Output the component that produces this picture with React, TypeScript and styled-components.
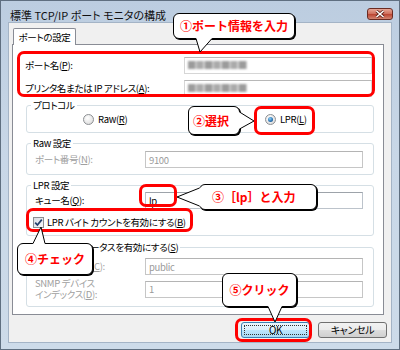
import React from "react";
import styled, { createGlobalStyle } from "styled-components";

const UI_FONT = `"Noto Sans CJK JP", "Noto Sans", sans-serif`;

const GlobalStyle = createGlobalStyle`
    html, body {
        margin: 0;
        padding: 0;
        background: #fff;
    }
    body {
        font-family: ${UI_FONT};
        font-size: 9.5px;
        letter-spacing: -0.35px;
        font-feature-settings: "palt";
        color: #000;
    }
    * {
        box-sizing: border-box;
    }
`

// Window frame

const Stage = styled.div`
    position: relative;
    width: 400px;
    height: 350px;
`

const Window = styled.div`
    width: 400px;
    height: 350px;
    border: 1px solid #5f6f80;
    background: linear-gradient(180deg, #bccde0 0%, #c8d7e7 45%, #cddbe9 100%);
    display: flex;
    flex-direction: column;
    padding: 0 7px 6px 7px;
`

const TitleBar = styled.div`
    height: 21px;
    display: flex;
    align-items: flex-start;
    justify-content: space-between;
`

const Title = styled.div`
    margin: 7px 0 0 2px;
    line-height: 14px;
    font-size: 11px;
    letter-spacing: 0;
    color: #101010;
`

const CloseButton = styled.div`
    margin: 7px -1px 0 0;
    width: 26px;
    height: 12px;
    border: 1px solid #6a2b22;
    border-radius: 3px;
    background: linear-gradient(180deg, #e7a797 0%, #cf6f5c 48%, #bb4330 52%, #d28571 100%);
    display: flex;
    align-items: center;
    justify-content: center;
`

const Client = styled.div`
    flex: 1;
    background: #f0f0f0;
    border: 1px solid #a4b4c6;
    display: flex;
    flex-direction: column;
    padding-top: 5px;
`

// Tabs

const TabStrip = styled.div`
    display: flex;
    padding-left: 4px;
    position: relative;
    z-index: 1;
`

const Tab = styled.div`
    width: 63px;
    height: 17px;
    margin-bottom: -1px;
    background: #fff;
    border: 1px solid #898c95;
    border-bottom: none;
    border-radius: 2px 2px 0 0;
    display: flex;
    align-items: center;
    justify-content: center;
    line-height: 14px;
`

const Panel = styled.div`
    margin-left: 3px;
    width: 372px;
    height: 271px;
    background: #fff;
    border: 1px solid #898c95;
    padding: 11px 10px 0 12px;
    display: flex;
    flex-direction: column;
`

// Rows and fields

const Row = styled.div<{ $h: number; $mt?: number; $ml?: number }>`
    display: flex;
    align-items: center;
    height: ${({ $h }) => $h}px;
    margin-top: ${({ $mt }) => $mt ?? 0}px;
    margin-left: ${({ $ml }) => $ml ?? 0}px;
`

const FieldLabel = styled.div<{ $w: number; $disabled?: boolean }>`
    width: ${({ $w }) => $w}px;
    flex: none;
    line-height: 11px;
    white-space: nowrap;
    color: ${({ $disabled }) => ($disabled ? "#a0a0a0" : "#000")};
`

const TextBox = styled.div<{ $w: number; $disabled?: boolean; $plain?: boolean }>`
    width: ${({ $w }) => $w}px;
    height: 17px;
    flex: none;
    display: flex;
    align-items: center;
    padding-left: 3px;
    background: #fff;
    border: 1px solid ${({ $disabled, $plain }) => ($plain ? "#d6d6d6" : $disabled ? "#c6c6c6" : "#bcc3cb")};
    border-top-color: ${({ $disabled, $plain }) => ($plain ? "#b8b8b8" : $disabled ? "#b4b4b4" : "#9da3aa")};
    color: ${({ $disabled }) => ($disabled ? "#9a9a9a" : "#000")};
`

const Blurred = styled.span`
    display: block;
    width: 59px;
    height: 8px;
    background: repeating-linear-gradient(90deg, #9b9b9b 0 7px, #c9c9c9 7px 9px, #aaaaaa 9px 15px, #d2d2d2 15px 17px);
    filter: blur(0.8px);
`

// Group boxes

const Group = styled.fieldset<{ $mt: number }>`
    margin: ${({ $mt }) => $mt}px -1px 0 1px;
    padding: 0 10px 6px 8px;
    border: 1px solid #d5dfe5;
    border-radius: 3px;
    min-width: 0;
`

const Legend = styled.legend<{ $disabled?: boolean }>`
    padding: 0 2px;
    margin-left: -4px;
    line-height: 14px;
    color: ${({ $disabled }) => ($disabled ? "#a0a0a0" : "#000")};
`

const RadioGrid = styled.div`
    display: grid;
    grid-template-columns: 182px auto;
    align-items: center;
    height: 14px;
    padding-left: 48px;
`

const Choice = styled.label`
    display: flex;
    align-items: center;
    gap: 4px;
    line-height: 14px;
`

const Radio = styled.span<{ $on?: boolean }>`
    width: 11px;
    height: 11px;
    border-radius: 50%;
    border: 1px solid #8c8f93;
    background: radial-gradient(circle at 40% 35%, #ffffff 0%, #e6e6e6 60%, #cfcfcf 100%);
    display: flex;
    align-items: center;
    justify-content: center;
    &::after {
        content: "";
        display: ${({ $on }) => ($on ? "block" : "none")};
        width: 5px;
        height: 5px;
        border-radius: 50%;
        background: radial-gradient(circle at 40% 35%, #8fd0f5 0%, #2d78b8 55%, #0e3d6e 100%);
    }
`

const Check = styled.span`
    width: 11px;
    height: 11px;
    flex: none;
    border: 1px solid #8c8f93;
    background: linear-gradient(135deg, #d9dde4 0%, #f7f8fa 100%);
    display: flex;
    align-items: center;
    justify-content: center;
    margin-right: 3px;
`

const CheckLine = styled.div`
    display: flex;
    align-items: center;
    line-height: 14px;
    white-space: nowrap;
`

// Buttons

const ButtonRow = styled.div`
    display: flex;
    justify-content: flex-end;
    gap: 8px;
    margin-top: 7px;
    padding-right: 4px;
`

const DlgButton = styled.div<{ $default?: boolean }>`
    width: 69px;
    height: 16px;
    border-radius: 3px;
    border: 1px solid ${({ $default }) => ($default ? "#3c7fb1" : "#707070")};
    background: ${({ $default }) =>
        $default
            ? "linear-gradient(180deg, #eaf6fd 0%, #d9f0fc 49%, #bee6fd 51%, #a7d9f5 100%)"
            : "linear-gradient(180deg, #f2f2f2 0%, #ebebeb 49%, #dddddd 51%, #cfcfcf 100%)"};
    display: flex;
    align-items: center;
    justify-content: center;
    line-height: 12px;
    font-size: 10px;
    position: relative;
    &::after {
        content: "";
        display: ${({ $default }) => ($default ? "block" : "none")};
        position: absolute;
        inset: 2px;
        border: 1px dotted #333;
    }
`

// Annotations

const Highlight = styled.div<{ $x: number; $y: number; $w: number; $h: number }>`
    position: absolute;
    left: ${({ $x }) => $x}px;
    top: ${({ $y }) => $y}px;
    width: ${({ $w }) => $w}px;
    height: ${({ $h }) => $h}px;
    border: 3px solid #ff0000;
    border-radius: 7px;
`

const Bubble = styled.div<{ $x: number; $y: number; $w: number; $h: number; $pl?: number }>`
    position: absolute;
    left: ${({ $x }) => $x}px;
    top: ${({ $y }) => $y}px;
    width: ${({ $w }) => $w}px;
    height: ${({ $h }) => $h}px;
    background: #fff;
    border: 1px solid #000;
    border-radius: 6px;
    box-shadow: 1px 1px 0 #000;
    display: flex;
    align-items: center;
    justify-content: ${({ $pl }) => ($pl !== undefined ? "flex-start" : "center")};
    padding-left: ${({ $pl }) => $pl ?? 0}px;
    font-family: ${UI_FONT};
    font-feature-settings: normal;
    letter-spacing: 0;
    font-weight: 700;
    font-size: 12px;
    line-height: 14px;
    color: #ff0000;
    white-space: nowrap;
`

const TailSvg = styled.svg`
    position: absolute;
    left: -1px;
    top: -1px;
    width: 1px;
    height: 1px;
    overflow: visible;
`

type Pt = [number, number]

function Tail(props: { e1: Pt; e2: Pt; tip: Pt }) {
    const { e1, e2, tip } = props
    const ext = (e: Pt): Pt => {
        const dx = e[0] - tip[0]
        const dy = e[1] - tip[1]
        const len = Math.hypot(dx, dy)
        return [e[0] + (dx / len) * 3, e[1] + (dy / len) * 3]
    }
    const i1 = ext(e1)
    const i2 = ext(e2)
    return (
        <TailSvg>
            <polygon points={`${i1.join(",")} ${tip.join(",")} ${i2.join(",")}`} fill="#fff" />
            <polyline
                points={`${e1.join(",")} ${tip.join(",")} ${e2.join(",")}`}
                fill="none"
                stroke="#000"
                strokeWidth="1"
            />
        </TailSvg>
    )
}

export default function App() {
    return (
        <Stage>
            <GlobalStyle />
            <Window>
                <TitleBar>
                    <Title>標準 TCP/IP ポート モニタの構成</Title>
                    <CloseButton>
                        <svg width="10" height="8" viewBox="0 0 10 8">
                            <path d="M1.5 1 L8.5 7 M8.5 1 L1.5 7" stroke="#5a1d14" strokeWidth="3" />
                            <path d="M1.5 1 L8.5 7 M8.5 1 L1.5 7" stroke="#fff" strokeWidth="1.6" />
                        </svg>
                    </CloseButton>
                </TitleBar>
                <Client>
                    <TabStrip>
                        <Tab>ポートの設定</Tab>
                    </TabStrip>
                    <Panel>
                        <Row $h={18}>
                            <FieldLabel $w={159}>ポート名(<u>P</u>):</FieldLabel>
                            <TextBox $w={188} $plain>
                                <Blurred />
                            </TextBox>
                        </Row>
                        <Row $h={18} $mt={5}>
                            <FieldLabel $w={159}>プリンタ名または IP アドレス(<u>A</u>):</FieldLabel>
                            <TextBox $w={188} $plain>
                                <Blurred />
                            </TextBox>
                        </Row>

                        <Group $mt={1}>
                            <Legend>プロトコル</Legend>
                            <RadioGrid>
                                <Choice>
                                    <Radio />
                                    <span>Raw(<u>R</u>)</span>
                                </Choice>
                                <Choice>
                                    <Radio $on />
                                    <span>LPR(<u>L</u>)</span>
                                </Choice>
                            </RadioGrid>
                        </Group>

                        <Group $mt={3}>
                            <Legend>Raw 設定</Legend>
                            <Row $h={17} $mt={1}>
                                <FieldLabel $w={110} $disabled>ポート番号(<u>N</u>):</FieldLabel>
                                <TextBox $w={218} $disabled>9100</TextBox>
                            </Row>
                        </Group>

                        <Group $mt={3}>
                            <Legend>LPR 設定</Legend>
                            <Row $h={17}>
                                <FieldLabel $w={110}>キュー名(<u>Q</u>):</FieldLabel>
                                <TextBox $w={218}>lp</TextBox>
                            </Row>
                            <Row $h={14} $mt={6} $ml={-2}>
                                <CheckLine>
                                    <Check>
                                        <svg width="9" height="9" viewBox="0 0 9 9">
                                            <path d="M1.2 4.6 L3.4 7 L7.8 1.6" fill="none" stroke="#233f6b" strokeWidth="1.7" />
                                        </svg>
                                    </Check>
                                    <span>LPR バイト カウントを有効にする(<u>B</u>)</span>
                                </CheckLine>
                            </Row>
                        </Group>

                        <Group $mt={4}>
                            <Legend>
                                <CheckLine>
                                    <Check />
                                    <span>SNMP ステータスを有効にする(<u>S</u>)</span>
                                </CheckLine>
                            </Legend>
                            <Row $h={17} $mt={4}>
                                <FieldLabel $w={110} $disabled>コミュニティ名(<u>C</u>):</FieldLabel>
                                <TextBox $w={218} $disabled>public</TextBox>
                            </Row>
                            <Row $h={22} $mt={3}>
                                <FieldLabel $w={110} $disabled>
                                    SNMP デバイス
                                    <br />
                                    インデックス(<u>D</u>):
                                </FieldLabel>
                                <TextBox $w={218} $disabled>1</TextBox>
                            </Row>
                        </Group>
                    </Panel>
                    <ButtonRow>
                        <DlgButton $default>OK</DlgButton>
                        <DlgButton>キャンセル</DlgButton>
                    </ButtonRow>
                </Client>
            </Window>

            <Highlight $x={17} $y={51} $w={358} $h={46} />
            <Highlight $x={254} $y={106} $w={61} $h={29} />
            <Highlight $x={139} $y={184} $w={38} $h={23} />
            <Highlight $x={26} $y={208} $w={167} $h={24} />
            <Highlight $x={235} $y={318} $w={77} $h={24} />

            <Bubble $x={173} $y={13} $w={122} $h={26}>
                <Tail e1={[23, 25.5]} e2={[39, 25.5]} tip={[27, 39]} />
                ①ポート情報を入力
            </Bubble>
            <Bubble $x={188} $y={106} $w={52} $h={29} $pl={4}>
                <Tail e1={[51.5, 6]} e2={[51.5, 23]} tip={[66, 15]} />
                ②選択
            </Bubble>
            <Bubble $x={199} $y={184} $w={118} $h={26} $pl={12}>
                <Tail e1={[0.5, 4]} e2={[0.5, 22]} tip={[-22, 13]} />
                ③［lp］と入力
            </Bubble>
            <Bubble $x={17} $y={243} $w={76} $h={32}>
                <Tail e1={[16, 0.5]} e2={[28, 0.5]} tip={[24, -16]} />
                ④チェック
            </Bubble>
            <Bubble $x={222} $y={273} $w={75} $h={34}>
                <Tail e1={[46, 33.5]} e2={[60, 33.5]} tip={[53, 49]} />
                ⑤クリック
            </Bubble>
        </Stage>
    )
}
